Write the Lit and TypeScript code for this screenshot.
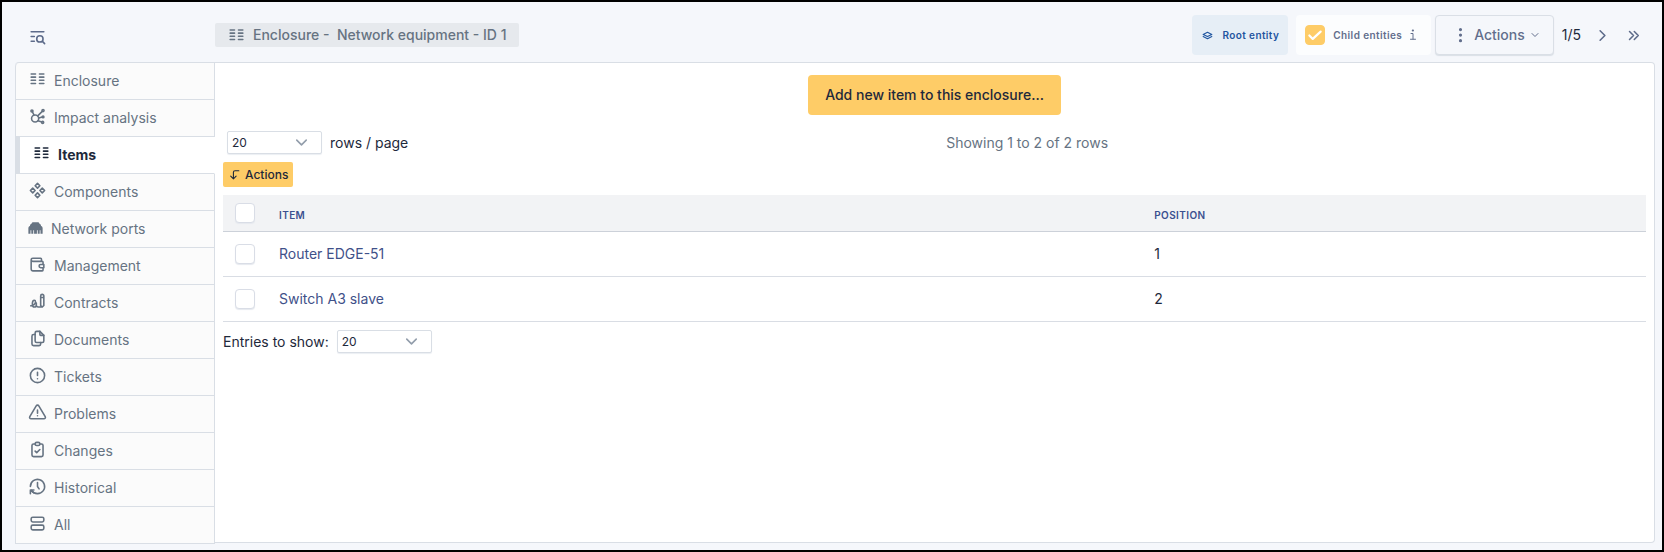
import { LitElement, html, css, svg, nothing, TemplateResult } from "lit";
import { customElement, property, state } from "lit/decorators.js";
import { classMap } from "lit/directives/class-map.js";

const paths: Record<string, TemplateResult> = {
  columns: svg`<path d="M4 5h5.5M4 9h5.500M4 13h5.500M4 17h5.500M14.500 5H20M14.500 9H20M14.500 13H20M14.500 17H20"/>`,
  impact: svg`<circle cx="9" cy="14.500" r="4.500"/><circle cx="5" cy="5" r="1.300"/><circle cx="19" cy="4.500" r="1.300"/><circle cx="19" cy="12.500" r="1.100"/><circle cx="18.500" cy="19.500" r="1.300"/><path d="M12.300 11.200 18 5.500M5.500 6l2 4M13.500 14l4.500-1.300M12.500 17.500l5 1.500"/>`,
  components: svg`<path d="m3 12 3 3 3-3-3-3zM15 12l3 3 3-3-3-3zM9 6l3 3 3-3-3-3zM9 18l3 3 3-3-3-3z"/>`,
  ethernet: svg`<path fill="currentColor" stroke="none" d="M3 20v-7c0-1.500.8-2.500 2-2.800 0-1.700.8-2.600 2-2.900C7.300 6 8.200 5.500 9.500 5.500h5c1.300 0 2.200.5 2.500 1.800 1.200.3 2 1.200 2 2.900 1.200.3 2 1.300 2 2.800v7h-2.700v-4.500h-1V20h-2.500v-4.500h-1V20h-3.600v-4.500h-1V20H6.700v-4.500h-1V20z"/>`,
  wallet: svg`<path d="M17 8V5a1 1 0 0 0-1-1H6a2 2 0 0 0 0 4h12a1 1 0 0 1 1 1v3m0 4v3a1 1 0 0 1-1 1H6a2 2 0 0 1-2-2V6"/><path d="M20 12v4h-4a2 2 0 0 1 0-4h4"/>`,
  contract: svg`<path d="M20 17V5c0-1.121-.879-2-2-2s-2 .879-2 2v12l2 2 2-2zM16 7h4M18 19h-5a2.500 2.500 0 0 1-2.500-2.500V14M3.500 17.500c3 0 6-2.500 6-5 0-1.200-.6-2-1.500-2-1.400 0-2.500 1.500-2.500 4.500 0 2.500.8 4 2.500 4s2.500-1.500 2.500-3"/>`,
  files: svg`<path d="M15 3v4a1 1 0 0 0 1 1h4"/><path d="M18 17h-7a2 2 0 0 1-2-2V5a2 2 0 0 1 2-2h4l5 5v7a2 2 0 0 1-2 2z"/><path d="M16 17v2a2 2 0 0 1-2 2H7a2 2 0 0 1-2-2V9a2 2 0 0 1 2-2h2"/>`,
  alertCircle: svg`<circle cx="12" cy="12" r="9"/><path d="M12 8v4M12 16h.01"/>`,
  alertTriangle: svg`<path d="M12 9v4M12 16h.01M10.363 3.591 2.257 17.125a1.914 1.914 0 0 0 1.636 2.871h16.214a1.914 1.914 0 0 0 1.636-2.870L13.637 3.591a1.914 1.914 0 0 0-3.274 0z"/>`,
  clipboard: svg`<path d="M9 5H7a2 2 0 0 0-2 2v12a2 2 0 0 0 2 2h10a2 2 0 0 0 2-2V7a2 2 0 0 0-2-2h-2"/><rect x="9" y="3" width="6" height="4" rx="2"/><path d="m9 14 2 2 4-4"/>`,
  history: svg`<path d="M12 7v5l2 3M4.500 17a9 9 0 1 0-1.500-5"/><path d="M3 21v-4.500h4.500M3.500 17l4 3"/>`,
  rows: svg`<rect x="4" y="4" width="16" height="6" rx="2"/><rect x="4" y="14" width="16" height="6" rx="2"/>`,
  listSearch: svg`<circle cx="15" cy="15" r="4"/><path d="m18.500 18.500 2.500 2.500M4 6h16M4 12h4M4 18h4"/>`,
  stack: svg`<path d="M12 6 4 10l8 4 8-4zM4 14l8 4 8-4"/>`,
  info: svg`<path d="M2 9h4v11M1 20.500h10"/><path d="M5.500 3h.5" stroke-width="4"/>`,
  dots: svg`<circle cx="12" cy="4.500" r="1"/><circle cx="12" cy="11.500" r="1"/><circle cx="12" cy="18.500" r="1"/>`,
  chevronDown: svg`<path d="m6 9 6 6 6-6"/>`,
  chevronRight: svg`<path d="m9 6 6 6-6 6"/>`,
  chevronsRight: svg`<path d="m7 7 5 5-5 5M13 7l5 5-5 5"/>`,
  cornerDown: svg`<path d="M20 5h-7a3 3 0 0 0-3 3v12m-5-5 5 5 5-5"/>`,
};

@customElement("ui-icon")
export class UiIcon extends LitElement {
  @property() name = "";

  static styles = css`
    :host {
      display: inline-flex;
      flex: none;
      width: 19px;
      height: 19px;
    }
    .glyph {
      width: 100%;
      height: 100%;
      fill: none;
      stroke: currentColor;
      stroke-width: 2;
      stroke-linecap: round;
      stroke-linejoin: round;
    }
  `;

  render() {
    return html`<svg class="glyph" viewBox="0 0 24 24" aria-hidden="true">${paths[this.name] ?? nothing}</svg>`;
  }
}

interface Tab {
  icon: string;
  label: string;
}

const tabs: Tab[] = [
  { icon: "columns", label: "Enclosure" },
  { icon: "impact", label: "Impact analysis" },
  { icon: "columns", label: "Items" },
  { icon: "components", label: "Components" },
  { icon: "ethernet", label: "Network ports" },
  { icon: "wallet", label: "Management" },
  { icon: "contract", label: "Contracts" },
  { icon: "files", label: "Documents" },
  { icon: "alertCircle", label: "Tickets" },
  { icon: "alertTriangle", label: "Problems" },
  { icon: "clipboard", label: "Changes" },
  { icon: "history", label: "Historical" },
  { icon: "rows", label: "All" },
];

const items = [
  { name: "Router EDGE-51", position: 1 },
  { name: "Switch A3 slave", position: 2 },
];

@customElement("app-root")
export class AppRoot extends LitElement {
  @state() private active = "Items";
  @state() private selected: string[] = [];

  static styles = css`
    :host {
      display: block;
      box-sizing: border-box;
      min-height: 100vh;
      padding: 13px 7px 7px 13px;
      border: 2px solid #000;
      background: #f5f7fb;
      color: #1e293b;
      font: 14px/20px Inter, sans-serif;
    }
    *,
    *::before {
      box-sizing: border-box;
    }
    a {
      color: inherit;
      text-decoration: none;
    }
    button,
    select {
      margin: 0;
      font: inherit;
      color: inherit;
      cursor: pointer;
    }

    .top {
      display: flex;
      align-items: center;
      height: 40px;
      margin-bottom: 7px;
    }
    .side {
      width: 200px;
      padding: 2px 0 0 13px;
      flex: none;
      display: flex;
    }
    .plain {
      display: inline-flex;
      padding: 0;
      border: 0;
      background: none;
      color: #5d6b8a;
    }
    .crumb {
      display: flex;
      align-items: center;
      gap: 7px;
      height: 24px;
      padding: 0 12px;
      border-radius: 2px;
      background: #e6e9ed;
      color: #667382;
      font-weight: 500;
      white-space: pre;
    }
    .tools {
      display: flex;
      align-items: center;
      margin-left: auto;
      margin-right: 12px;
    }
    .entity {
      display: flex;
      align-items: center;
      gap: 8px;
      height: 40px;
      margin-right: 8px;
      padding: 0 9px;
      border-radius: 4px;
      background: #e6eef6;
      color: #1f55a0;
      font-size: 10px;
      font-weight: 600;
      letter-spacing: 0.04em;
    }
    .entity ui-icon {
      width: 13px;
      height: 13px;
    }
    .entity.child {
      margin-right: 4px;
      background: #fcfdfe;
      color: #626e8c;
    }
    .child ui-icon {
      width: 12px;
      height: 12px;
    }
    .menu {
      display: flex;
      align-items: center;
      gap: 4px;
      height: 40px;
      margin-right: 8px;
      padding: 0 12px 0 15px;
      border: 1px solid #dadfe6;
      border-radius: 4px;
      background: #f5f7fb;
      box-shadow: 0 1px 1px #dadfe6;
      color: #626e8c;
      font-weight: 500;
    }
    .menu .caret {
      width: 12px;
      height: 12px;
    }
    .pager {
      display: flex;
      align-items: center;
      gap: 12px;
    }

    .layout {
      display: flex;
    }
    .tabs {
      display: flex;
      flex-direction: column;
      flex: none;
      width: 200px;
      margin-bottom: -1px;
      border-top: 1px solid #d9dee5;
      border-radius: 4px 0 0 0;
    }
    .tab {
      display: flex;
      align-items: center;
      gap: 7px;
      height: 37px;
      padding: 0 12px;
      border: 1px solid #d9dee5;
      border-top: 0;
      background: #fbfbfb;
      color: #667382;
    }
    .tab:first-child {
      border-top-left-radius: 4px;
    }
    .tab ui-icon {
      margin-bottom: 4px;
    }
    .tab.wide {
      padding-left: 10px;
      gap: 6px;
    }
    .tab.active {
      border-left-width: 5px;
      border-right-color: #fff;
      background: #fff;
      color: #1e293b;
      font-weight: 700;
    }
    .card {
      flex: 1;
      min-width: 0;
      padding: 12px 8px;
      border: 1px solid #d9dee5;
      border-left: 0;
      border-radius: 0 4px 4px 0;
      background: #fff;
    }
    .center {
      display: flex;
      justify-content: center;
    }
    .primary {
      display: inline-flex;
      align-items: center;
      height: 40px;
      padding: 0 17px;
      border: 0;
      border-radius: 4px;
      background: #fecc67;
      color: #1e293b;
      font-weight: 500;
    }
    .primary.small {
      gap: 4px;
      height: 25px;
      padding: 0 5px;
      border-radius: 2px;
      font-size: 12px;
    }
    .small ui-icon {
      width: 13px;
      height: 13px;
    }
    .bar {
      display: flex;
      align-items: center;
      gap: 8px;
      margin: 16px 0 8px;
      padding-left: 4px;
    }
    .summary {
      flex: 1;
      padding-right: 8px;
      text-align: center;
      color: #667382;
    }
    .picker {
      display: grid;
      align-items: center;
      width: 95px;
    }
    .picker > * {
      grid-area: 1 / 1;
    }
    .picker ui-icon {
      width: 19px;
      height: 19px;
      margin-right: 11px;
      justify-self: end;
      color: #929dab;
      pointer-events: none;
    }
    .select {
      appearance: none;
      height: 23px;
      padding: 0 4px;
      border: 1px solid #d9dee5;
      border-radius: 2px;
      background: #fff;
      box-shadow: 0 1px 1px #eceff3;
      font-size: 12px;
    }
    .check {
      appearance: none;
      display: block;
      width: 20px;
      height: 20px;
      margin: 0;
      border: 1px solid #d9dde6;
      border-radius: 4px;
      background: #fff;
      box-shadow: 0 1px 1px #e6e9ef;
    }
    .check:checked {
      border-color: #fecc67;
      box-shadow: none;
      background: #fecc67
        url("data:image/svg+xml,%3Csvg xmlns='http://www.w3.org/2000/svg' viewBox='0 0 16 16' fill='none' stroke='white' stroke-width='2' stroke-linecap='round' stroke-linejoin='round'%3E%3Cpath d='M3 8.500l3 3 7-6.500'/%3E%3C/svg%3E")
        center / 18px no-repeat;
    }

    .grid {
      width: 100%;
      margin: 8px 0;
      border-collapse: separate;
      border-spacing: 0;
      table-layout: fixed;
    }
    .grid th,
    .grid td {
      height: 45px;
      padding: 0 12px;
      border-bottom: 1px solid #d9dde4;
      text-align: left;
    }
    .grid th {
      height: 37px;
      padding-top: 4px;
      background: #f2f3f5;
      border-color: #ccd1d9;
      color: #3b5090;
      font-size: 10px;
      font-weight: 600;
      letter-spacing: 0.04em;
      text-transform: uppercase;
    }
    .grid .pick {
      width: 44px;
      padding-top: 0;
    }
    .grid .pos {
      width: 35.4%;
    }
    .grid a {
      color: #3f5189;
    }
    .foot {
      display: flex;
      align-items: center;
      gap: 8px;
    }
  `;

  private toggle(name: string) {
    this.selected = this.selected.includes(name)
      ? this.selected.filter((n) => n !== name)
      : [...this.selected, name];
  }

  private toggleAll() {
    this.selected = this.selected.length === items.length ? [] : items.map((i) => i.name);
  }

  private open(event: Event, label: string) {
    event.preventDefault();
    this.active = label;
  }

  private picker(id: string) {
    return html`<span class="picker">
      <select class="select" id=${id}>
        <option>10</option>
        <option selected>20</option>
        <option>50</option>
      </select>
      <ui-icon name="chevronDown"></ui-icon>
    </span>`;
  }

  private header() {
    return html`<header class="top">
      <div class="side">
        <button class="plain" aria-label="Search list"><ui-icon name="listSearch"></ui-icon></button>
      </div>
      <div class="crumb"><ui-icon name="columns"></ui-icon><span>Enclosure -  Network equipment - ID 1</span></div>
      <div class="tools">
        <span class="entity"><ui-icon name="stack"></ui-icon>Root entity</span>
        <label class="entity child">
          <input class="check" type="checkbox" checked />Child entities<ui-icon name="info"></ui-icon>
        </label>
        <button class="menu">
          <ui-icon name="dots"></ui-icon>Actions<ui-icon class="caret" name="chevronDown"></ui-icon>
        </button>
        <nav class="pager" aria-label="Records">
          <span>1/5</span>
          <a class="plain" href="#next" aria-label="Next"><ui-icon name="chevronRight"></ui-icon></a>
          <a class="plain" href="#last" aria-label="Last"><ui-icon name="chevronsRight"></ui-icon></a>
        </nav>
      </div>
    </header>`;
  }

  private table() {
    return html`<table class="grid">
      <thead>
        <tr>
          <th class="pick">
            <input class="check" type="checkbox" aria-label="Select all"
              .checked=${this.selected.length === items.length} @change=${this.toggleAll} />
          </th>
          <th>Item</th>
          <th class="pos">Position</th>
        </tr>
      </thead>
      <tbody>
        ${items.map(
          (item) => html`<tr>
            <td>
              <input class="check" type="checkbox" aria-label=${item.name}
                .checked=${this.selected.includes(item.name)} @change=${() => this.toggle(item.name)} />
            </td>
            <td><a href="#item">${item.name}</a></td>
            <td>${item.position}</td>
          </tr>`,
        )}
      </tbody>
    </table>`;
  }

  render() {
    return html`
      ${this.header()}
      <div class="layout">
        <nav class="tabs" aria-label="Sections">
          ${tabs.map(
            (tab) => html`<a
              href="#tab"
              class=${classMap({ tab: true, active: tab.label === this.active, wide: tab.icon === "ethernet" })}
              @click=${(e: Event) => this.open(e, tab.label)}
              ><ui-icon name=${tab.icon}></ui-icon>${tab.label}</a
            >`,
          )}
        </nav>
        <main class="card">
          <div class="center"><button class="primary">Add new item to this enclosure...</button></div>
          <div class="bar">
            ${this.picker("page-size")}
            <label for="page-size">rows / page</label>
            <span class="summary">Showing 1 to 2 of 2 rows</span>
          </div>
          <button class="primary small"><ui-icon name="cornerDown"></ui-icon>Actions</button>
          ${this.table()}
          <div class="foot">
            <label for="entries">Entries to show:</label>
            ${this.picker("entries")}
          </div>
        </main>
      </div>
    `;
  }
}
